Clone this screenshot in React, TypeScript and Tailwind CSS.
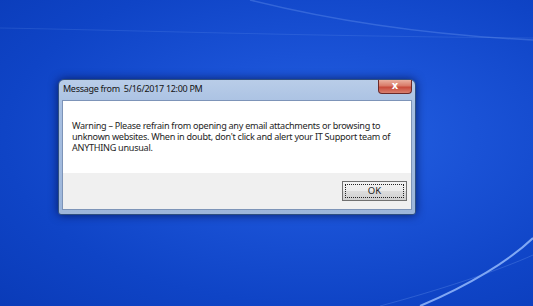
import React from "react";

export default function App() {
  return (
    <div className="relative w-[533px] h-[306px] overflow-hidden bg-[radial-gradient(ellipse_at_60%_45%,#2563e3_0%,#1a52d6_35%,#0f44c6_70%,#0a3bb8_100%)] font-['Noto_Sans',sans-serif]">
      <svg className="absolute inset-0" width="533" height="306" viewBox="0 0 533 306">
        <path d="M250 0 C 330 20, 430 35, 533 40" stroke="#6f9bf0" strokeOpacity="0.35" strokeWidth="1.5" fill="none" />
        <path d="M0 28 C 120 30, 300 36, 533 38" stroke="#6f9bf0" strokeOpacity="0.2" strokeWidth="1" fill="none" />
        <path d="M420 306 C 470 285, 510 260, 533 238" stroke="#9cc0ff" strokeOpacity="0.8" strokeWidth="2" fill="none" />
        <path d="M380 306 C 440 290, 500 270, 533 255" stroke="#6f9bf0" strokeOpacity="0.3" strokeWidth="1" fill="none" />
      </svg>
      <div className="relative pt-[79px] pl-[58px]">
        <div className="w-[358px] h-[136px] rounded-t-[6px] rounded-b-[3px] border border-[#2f4f7f] bg-[linear-gradient(180deg,#b9cde8_0%,#a8c0e2_20%,#9db6da_100%)] shadow-[0_0_10px_rgba(0,10,60,0.7)] flex flex-col">
          <div className="h-[20px] flex items-start relative">
            <div className="pl-[4px] pt-[3px] text-[9px] tracking-[-0.3px] leading-[12px] text-[#141414] whitespace-pre">Message from  5/16/2017 12:00 PM</div>
            <div className="absolute right-[3px] top-0 w-[34px] h-[14px] rounded-b-[4px] border border-t-0 border-[#6b2a2a] bg-[linear-gradient(180deg,#eab0a0_0%,#d97a68_45%,#c84a3a_55%,#d98070_100%)] flex items-center justify-center">
              <span className="text-white text-[10px] leading-none font-bold font-['DejaVu_Sans',sans-serif] -mt-[1px]">x</span>
            </div>
          </div>
          <div className="mx-[3px] mb-[4px] flex-1 border border-[#7d94b8] bg-white flex flex-col">
            <div className="h-[72px] pl-[9px] pr-[4px] pt-[19px] text-[9.1px] tracking-[-0.28px] leading-[11.2px] text-[#1e1e1e] whitespace-nowrap">
              <p>Warning – Please refrain from opening any email attachments or browsing to</p>
              <p>unknown websites. When in doubt, don't click and alert your IT Support team of</p>
              <p>ANYTHING unusual.</p>
            </div>
            <div className="flex-1 bg-[#f0f0f0] flex justify-end items-start pt-[8px] pr-[4px]">
              <div className="w-[65px] h-[20px] border border-[#707070] bg-[linear-gradient(180deg,#f2f2f2_0%,#ebebeb_50%,#dddddd_51%,#cfcfcf_100%)] p-[2px]">
                <div className="w-full h-full border border-dotted border-[#222] flex items-center justify-center text-[9.5px] leading-none text-[#1e1e1e]">OK</div>
              </div>
            </div>
          </div>
        </div>
      </div>
    </div>
  );
}
